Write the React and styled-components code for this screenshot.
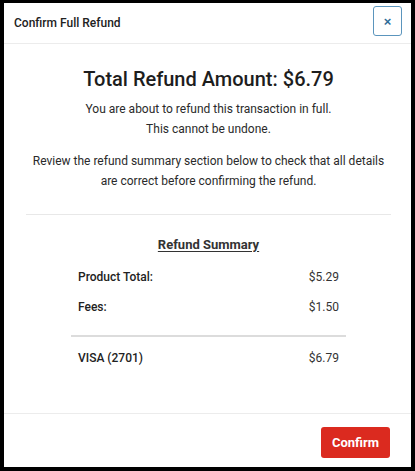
import styled, { createGlobalStyle } from "styled-components";

const GlobalStyle = createGlobalStyle`
  html, body {
    margin: 0;
    padding: 0;
    background: #000;
  }
  body {
    font-family: Roboto, "Liberation Sans", Arial, sans-serif;
    color: #212121;
  }
`;

const Frame = styled.div`
  padding: 3px 4px 4px 4px;
`;

const Modal = styled.div`
  background: #fff;
  height: 464px;
  display: flex;
  flex-direction: column;
`;

const Header = styled.div`
  height: 40px;
  border-bottom: 1px solid #ececec;
  display: flex;
  align-items: flex-start;
  justify-content: space-between;
  padding: 0 9px 0 10px;
`;

const HeaderTitle = styled.h2`
  margin: 0;
  font-size: 12px;
  font-weight: 500;
  line-height: 41px;
  color: #222;
`;

const CloseButton = styled.button`
  margin-top: 3px;
  width: 29px;
  height: 30px;
  border: 1px solid #5b95bd;
  border-radius: 3px;
  background: #fff;
  color: #2e6c98;
  font-size: 13px;
  font-weight: 700;
  line-height: 1;
  padding: 0;
  cursor: pointer;
`;

const Body = styled.div`
  flex: 1;
  padding: 0 20px 0 22px;
  text-align: center;
`;

const Title = styled.h1`
  margin: 23px 0 8px;
  font-size: 20px;
  font-weight: 500;
  line-height: 24px;
  color: #1d1d1d;
`;

const Text = styled.p`
  margin: 0 0 12px;
  font-size: 12px;
  line-height: 20px;
  color: #2a2a2a;
`;

const Divider = styled.hr`
  border: 0;
  border-top: 1px solid #e8e8e8;
  margin: 23px 0 0;
`;

const Summary = styled.div`
  width: 275px;
  margin: 0 auto;
  padding-top: 20px;
`;

const SummaryTitle = styled.h3`
  margin: 0 0 7px;
  font-size: 13px;
  font-weight: 700;
  line-height: 20px;
  text-decoration: underline;
  text-underline-offset: 2px;
  color: #333;
`;

const Row = styled.div`
  display: flex;
  justify-content: space-between;
  padding: 0 7px;
  height: 30px;
  align-items: center;
  font-size: 12px;
`;

const Label = styled.span`
  font-weight: 500;
  color: #222;
`;

const Value = styled.span`
  color: #333;
`;

const SummaryDivider = styled.hr`
  border: 0;
  border-top: 2px solid #dcdcdc;
  margin: 13px 0 6px;
`;

const Footer = styled.div`
  border-top: 1px solid #ececec;
  height: 53px;
  display: flex;
  align-items: center;
  justify-content: flex-end;
  padding: 0 21px 0 0;
`;

const ConfirmButton = styled.button`
  margin-top: 4px;
  width: 69px;
  height: 31px;
  background: #db2a1f;
  color: #fff;
  border: 0;
  border-radius: 3px;
  font-family: inherit;
  font-size: 13px;
  font-weight: 700;
  cursor: pointer;
`;

export default function App() {
  return (
    <>
      <GlobalStyle />
      <Frame>
        <Modal>
          <Header>
            <HeaderTitle>Confirm Full Refund</HeaderTitle>
            <CloseButton aria-label="Close">×</CloseButton>
          </Header>
          <Body>
            <Title>Total Refund Amount: $6.79</Title>
            <Text>
              You are about to refund this transaction in full.
              <br />
              This cannot be undone.
            </Text>
            <Text>
              Review the refund summary section below to check that all details
              are correct before confirming the refund.
            </Text>
            <Divider />
            <Summary>
              <SummaryTitle>Refund Summary</SummaryTitle>
              <Row>
                <Label>Product Total:</Label>
                <Value>$5.29</Value>
              </Row>
              <Row>
                <Label>Fees:</Label>
                <Value>$1.50</Value>
              </Row>
              <SummaryDivider />
              <Row>
                <Label>VISA (2701)</Label>
                <Value>$6.79</Value>
              </Row>
            </Summary>
          </Body>
          <Footer>
            <ConfirmButton>Confirm</ConfirmButton>
          </Footer>
        </Modal>
      </Frame>
    </>
  );
}
